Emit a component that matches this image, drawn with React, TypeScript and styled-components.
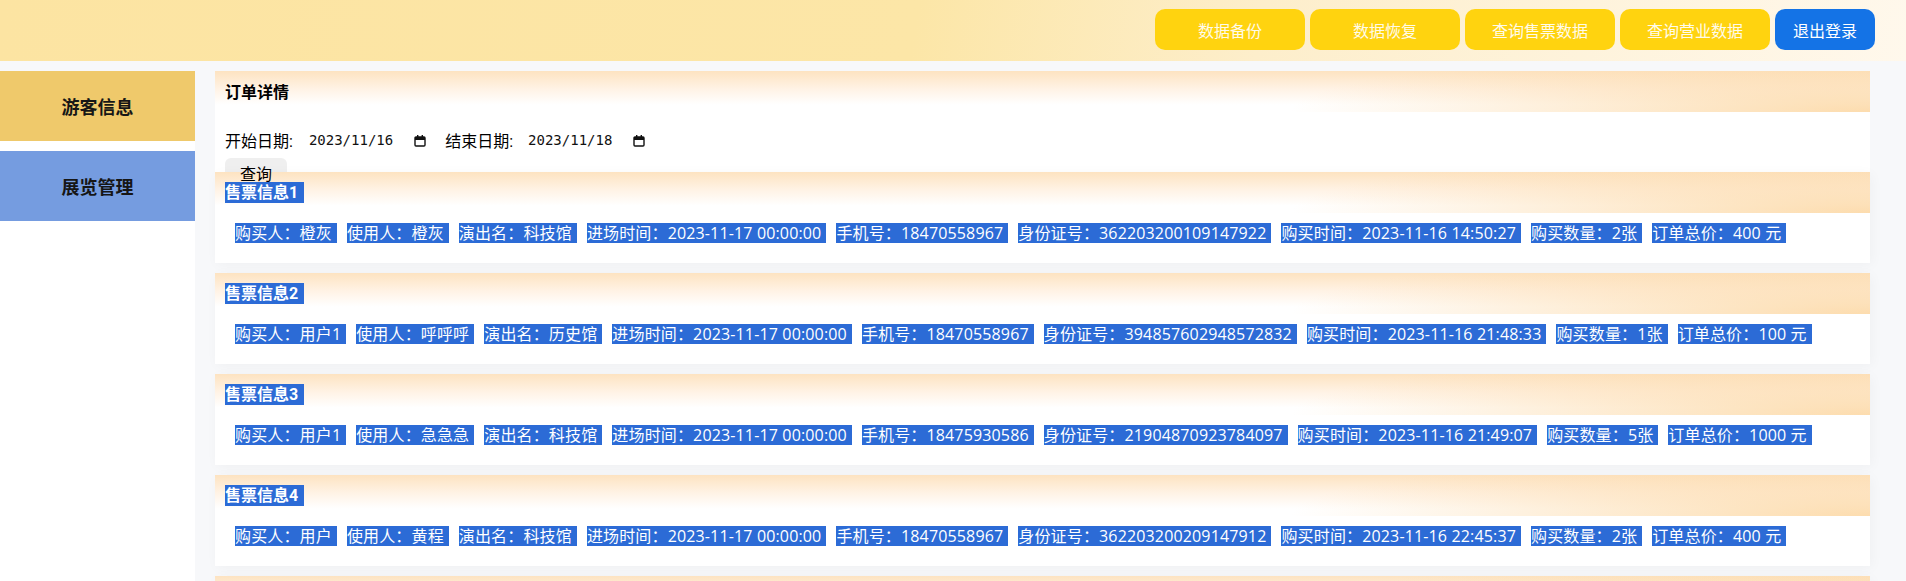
import React from 'react';
import styled, { createGlobalStyle } from 'styled-components';

const GlobalStyle = createGlobalStyle`
  html, body { margin: 0; padding: 0; overflow: hidden; }
  body {
    font-family: Roboto, "Noto Sans CJK SC", sans-serif;
    background: #f7f8fa;
    color: #000;
  }
  * { box-sizing: border-box; }
`;

const Page = styled.div`
  display: flex;
  flex-direction: column;
  height: 100vh;
`;

const Header = styled.header`
  flex: none;
  height: 61px;
  display: flex;
  justify-content: flex-end;
  align-items: flex-start;
  gap: 5px;
  padding: 9px 31px 0 0;
  background: linear-gradient(100deg, #fce4a2 0%, #fce6a7 48%, #fdeecb 66%, #fff8ec 100%);
`;

const HeaderButton = styled.button<{ $tone: 'yellow' | 'blue' }>`
  width: ${(p) => (p.$tone === 'blue' ? 100 : 150)}px;
  height: 41px;
  padding: 0;
  border: none;
  border-radius: 10px;
  background: ${(p) => (p.$tone === 'blue' ? '#1473e6' : '#ffd30f')};
  color: ${(p) => (p.$tone === 'blue' ? '#fff' : '#fffbea')};
  font-family: inherit;
  font-size: 16px;
  cursor: pointer;
`;

const Body = styled.div`
  flex: 1;
  min-height: 0;
  display: flex;
  padding-top: 10px;
  background: #f7f8fa;
  overflow: hidden;
`;

const Sidebar = styled.nav`
  flex: none;
  width: 195px;
  display: flex;
  flex-direction: column;
  gap: 10px;
  background: #fff;
`;

const NavItem = styled.div<{ $tone: 'gold' | 'blue' }>`
  height: 70px;
  display: flex;
  align-items: center;
  justify-content: center;
  background: ${(p) => (p.$tone === 'gold' ? '#efc96b' : '#759ce0')};
  color: #161616;
  font-size: 18px;
  font-weight: 700;
`;

const Main = styled.main`
  flex: 1;
  min-width: 0;
  padding: 0 36px 0 20px;
`;

const headerGradient = `
  radial-gradient(ellipse 35% 160% at 100% 100%, rgba(252, 214, 160, 0.85), rgba(252, 214, 160, 0) 100%),
  linear-gradient(to bottom, #fde3c1 0%, #fff3e6 45%, #ffffff 82%)
`;

const Panel = styled.section`
  height: 101px;
  background: #fff;
`;

const PanelHeader = styled.div`
  height: 41px;
  padding: 11px 10px 0;
  background: ${headerGradient};
  font-size: 16px;
  font-weight: 700;
  line-height: 22px;
`;

const PanelBody = styled.div`
  padding: 16px 10px 0;
`;

const DateRow = styled.div`
  display: flex;
  align-items: center;
  height: 24px;
  font-size: 16px;
`;

const DateField = styled.span<{ $lead: number }>`
  display: inline-flex;
  align-items: center;
  gap: 21px;
  padding: 0 19px 0 ${(p) => p.$lead}px;
  font-family: "DejaVu Sans Mono", "Liberation Mono", monospace;
  font-size: 14px;
  color: #111;
`;

const QueryButton = styled.button`
  display: block;
  height: 34px;
  margin-top: 6px;
  padding: 0 15px;
  border: none;
  border-radius: 6px;
  background: #efefef;
  color: #000;
  font-family: inherit;
  font-size: 16px;
  line-height: 34px;
`;

const TicketCard = styled.article`
  height: 91px;
  margin-bottom: 10px;
  background: #fff;
  box-shadow: 2px 2px 12px rgba(0, 0, 0, 0.035);
`;

const CardHeader = styled.div`
  height: 41px;
  padding: 10px 10px 0;
  background: ${headerGradient};
`;

const Highlight = styled.span`
  display: inline-block;
  vertical-align: top;
  background: #2c6bd6;
  color: #fff;
  white-space: pre;
`;

const CardTitle = styled(Highlight)`
  height: 21px;
  line-height: 21px;
  padding-right: 6px;
  font-size: 16px;
  font-weight: 700;
`;

const CardBody = styled.div`
  height: 50px;
  padding: 10px 20px 0;
  white-space: nowrap;
  overflow: hidden;
  font-size: 0;
`;

const Field = styled(Highlight)`
  height: 20px;
  line-height: 20px;
  padding-right: 5px;
  margin-right: 10px;
  font-family: "Open Sans", "Noto Sans CJK SC", sans-serif;
  font-size: 16px;
  letter-spacing: 0.15px;
`;

const CalendarIcon = () => (
  <svg width="12" height="13" viewBox="0 0 12 13" aria-hidden="true">
    <rect x="1" y="3" width="10" height="9" rx="1" fill="none" stroke="#111" strokeWidth="1.4" />
    <rect x="1" y="3" width="10" height="3" fill="#111" />
    <rect x="3" y="1" width="1.4" height="2.5" fill="#111" />
    <rect x="7.6" y="1" width="1.4" height="2.5" fill="#111" />
  </svg>
);

type Ticket = {
  buyer: string;
  user: string;
  show: string;
  entry: string;
  phone: string;
  idNo: string;
  bought: string;
  count: string;
  total: string;
};

const tickets: Ticket[] = [
  {
    buyer: '橙灰', user: '橙灰', show: '科技馆', entry: '2023-11-17 00:00:00',
    phone: '18470558967', idNo: '362203200109147922', bought: '2023-11-16 14:50:27',
    count: '2张', total: '400 元',
  },
  {
    buyer: '用户1', user: '呼呼呼', show: '历史馆', entry: '2023-11-17 00:00:00',
    phone: '18470558967', idNo: '394857602948572832', bought: '2023-11-16 21:48:33',
    count: '1张', total: '100 元',
  },
  {
    buyer: '用户1', user: '急急急', show: '科技馆', entry: '2023-11-17 00:00:00',
    phone: '18475930586', idNo: '21904870923784097', bought: '2023-11-16 21:49:07',
    count: '5张', total: '1000 元',
  },
  {
    buyer: '用户', user: '黄程', show: '科技馆', entry: '2023-11-17 00:00:00',
    phone: '18470558967', idNo: '362203200209147912', bought: '2023-11-16 22:45:37',
    count: '2张', total: '400 元',
  },
];

const fieldsOf = (t: Ticket): [string, string][] => [
  ['购买人', t.buyer],
  ['使用人', t.user],
  ['演出名', t.show],
  ['进场时间', t.entry],
  ['手机号', t.phone],
  ['身份证号', t.idNo],
  ['购买时间', t.bought],
  ['购买数量', t.count],
  ['订单总价', t.total],
];

export default function App() {
  return (
    <>
      <GlobalStyle />
      <Page>
        <Header>
          <HeaderButton $tone="yellow">数据备份</HeaderButton>
          <HeaderButton $tone="yellow">数据恢复</HeaderButton>
          <HeaderButton $tone="yellow">查询售票数据</HeaderButton>
          <HeaderButton $tone="yellow">查询营业数据</HeaderButton>
          <HeaderButton $tone="blue">退出登录</HeaderButton>
        </Header>
        <Body>
          <Sidebar>
            <NavItem $tone="gold">游客信息</NavItem>
            <NavItem $tone="blue">展览管理</NavItem>
          </Sidebar>
          <Main>
            <Panel>
              <PanelHeader>订单详情</PanelHeader>
              <PanelBody>
                <DateRow>
                  <span>开始日期:</span>
                  <DateField $lead={16}>
                    2023/11/16
                    <CalendarIcon />
                  </DateField>
                  <span>结束日期:</span>
                  <DateField $lead={15}>
                    2023/11/18
                    <CalendarIcon />
                  </DateField>
                </DateRow>
                <QueryButton>查询</QueryButton>
              </PanelBody>
            </Panel>
            {tickets.map((t, i) => (
              <TicketCard key={i}>
                <CardHeader>
                  <CardTitle>{`售票信息${i + 1}`}</CardTitle>
                </CardHeader>
                <CardBody>
                  {fieldsOf(t).map(([k, v]) => (
                    <Field key={k}>{`${k}：${v}`}</Field>
                  ))}
                </CardBody>
              </TicketCard>
            ))}
            <TicketCard aria-hidden="true">
              <CardHeader />
            </TicketCard>
          </Main>
        </Body>
      </Page>
    </>
  );
}
